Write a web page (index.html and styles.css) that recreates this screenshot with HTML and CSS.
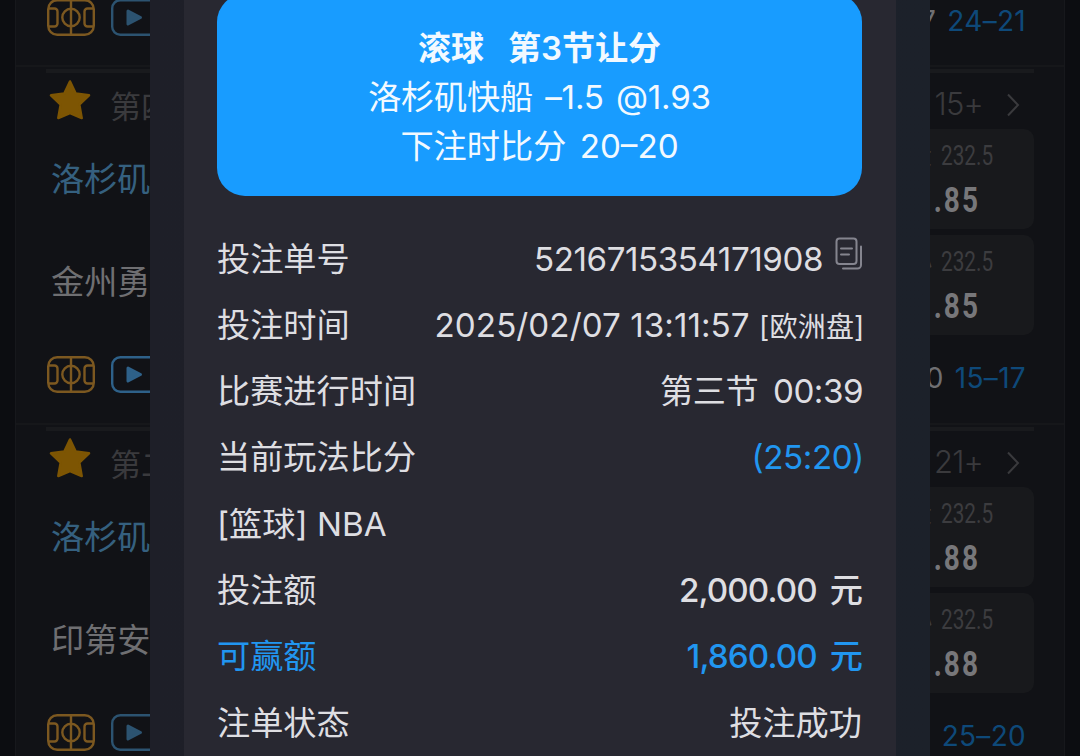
FILE: index.html
```html
<!DOCTYPE html>
<html lang="zh-CN">
<head>
  <meta charset="UTF-8" />
  <meta name="viewport" content="width=device-width, initial-scale=1.0"/>
  <title>注单详情</title>
  <link rel="stylesheet" href="styles.css">
</head>
<body>
  <!-- shared icons -->
  <svg class="sprite">
    <symbol id="court" viewBox="0 0 48 37">
      <g fill="none" stroke="currentColor" stroke-width="2.400">
        <rect x="1.200" y="1.200" width="45.600" height="34.600" rx="9"/>
        <path d="M24 1v35M2 9.500h5.500a3 3 0 0 1 3 3v12a3 3 0 0 1-3 3H2M46 9.500h-5.500a3 3 0 0 0-3 3v12a3 3 0 0 0 3 3H46"/>
        <circle cx="24" cy="18.500" r="8.700"/>
      </g>
    </symbol>
    <symbol id="video" viewBox="0 0 48 37">
      <rect x="1.200" y="1.200" width="45.600" height="34.600" rx="8" fill="none" stroke="currentColor" stroke-width="2.400"/>
      <path d="M17 12l12.500 6.500-12.500 6.500z" fill="currentColor" stroke="currentColor" stroke-width="3" stroke-linejoin="round"/>
    </symbol>
    <symbol id="star" viewBox="0 0 42 40">
      <path d="M21 1.500l5.700 12 13.300 1.800-9.700 9.200 2.400 13.500L21 33.200 9.300 38l2.400-13.500L2 15.300l13.300-1.800z" fill="currentColor" stroke="currentColor" stroke-width="2.500" stroke-linejoin="round"/>
    </symbol>
    <symbol id="arrow" viewBox="0 0 14 24">
      <path d="M2 1.500l10 10.500L2 22.500" fill="none" stroke="currentColor" stroke-width="2"/>
    </symbol>
  </svg>

  <main class="list">
    <article class="game first">
      <div class="foot">
        <svg class="court"><use href="#court"/></svg>
        <svg class="video"><use href="#video"/></svg>
        <div class="score"><span>7</span> 24–21</div>
      </div>
    </article>

    <article class="game">
      <div class="bar"></div>
      <div class="head">
        <svg class="star"><use href="#star"/></svg>
        <span class="period">第四节</span>
        <span class="more">15+</span>
        <svg class="arrow"><use href="#arrow"/></svg>
      </div>
      <div class="body">
        <div class="teams">
          <div class="team hot">洛杉矶快船</div>
          <div class="team">金州勇士</div>
        </div>
        <div class="odds">
          <div class="card"><div class="line"><i>大</i><span>232.5</span></div><b>1.85</b></div>
          <div class="card"><div class="line"><i>小</i><span>232.5</span></div><b>1.85</b></div>
        </div>
      </div>
      <div class="foot">
        <svg class="court"><use href="#court"/></svg>
        <svg class="video bright"><use href="#video"/></svg>
        <div class="score"><span>0</span> 15–17</div>
      </div>
    </article>

    <article class="game">
      <div class="bar"></div>
      <div class="head">
        <svg class="star"><use href="#star"/></svg>
        <span class="period">第二节</span>
        <span class="more">21+</span>
        <svg class="arrow"><use href="#arrow"/></svg>
      </div>
      <div class="body">
        <div class="teams">
          <div class="team hot">洛杉矶快船</div>
          <div class="team">印第安纳</div>
        </div>
        <div class="odds">
          <div class="card"><div class="line"><i>大</i><span>232.5</span></div><b>1.88</b></div>
          <div class="card"><div class="line"><i>小</i><span>232.5</span></div><b>1.88</b></div>
        </div>
      </div>
      <div class="foot">
        <svg class="court"><use href="#court"/></svg>
        <svg class="video"><use href="#video"/></svg>
        <div class="score">25–20</div>
      </div>
    </article>
  </main>

  <div class="modal">
    <section class="ticket">
      <div class="banner">
        <h1><span>滚球</span><span>第3节让分</span></h1>
        <p class="pick">洛杉矶快船 –1.5 @1.93</p>
        <p class="at">下注时比分 20–20</p>
      </div>

      <div class="row">
        <span>投注单号</span>
        <span class="value id">5216715354171908
          <svg class="copy" viewBox="0 0 28 34" fill="none" stroke="currentColor" stroke-width="2">
            <rect x="1.500" y="1.500" width="20" height="25.500" rx="3"/>
            <path d="M6 11.500h11M6 17.500h8M8 31.500h14.500a3.500 3.500 0 0 0 3.500-3.500V9.500" stroke-linecap="round"/>
          </svg>
        </span>
      </div>
      <div class="row">
        <span>投注时间</span>
        <span class="value time">2025/02/07 13:11:57 <small>[欧洲盘]</small></span>
      </div>
      <div class="row">
        <span>比赛进行时间</span>
        <span class="value clock">第三节 00:39</span>
      </div>
      <div class="row">
        <span>当前玩法比分</span>
        <span class="value now blue">(25:20)</span>
      </div>
      <div class="row">
        <span class="league">[篮球] NBA</span>
      </div>
      <div class="row">
        <span>投注额</span>
        <span class="value money">2,000.00 元</span>
      </div>
      <div class="row blue">
        <span>可赢额</span>
        <span class="value money">1,860.00 元</span>
      </div>
      <div class="row">
        <span>注单状态</span>
        <span class="value">投注成功</span>
      </div>
    </section>
  </div>
</body>
</html>
```
FILE: styles.css
```css
body {
  margin: 0;
  height: 756px;
  position: relative;
  overflow: hidden;
  background: #0c0d11;
  color: #dedee2;
  font-family: Inter, "Noto Sans CJK SC", sans-serif;
  font-size: 33.2px;
  font-weight: 370;
}
.sprite {
  display: none;
}
svg {
  display: block;
  flex: none;
}

/* match list */
.list {
  margin: 0 15px;
  border-left: 1px solid #17181c;
  border-right: 1px solid #17181c;
  background: #111216;
}
.game {
  height: 358px;
  box-sizing: border-box;
  border-top: 2px solid #16171a;
  padding: 0 30px;
  overflow: hidden;
}
.first {
  height: 65px;
  border: 0;
}
.first .foot {
  margin-top: -22px;
}
.bar {
  height: 4px;
  margin: 2px 0 0;
  background: #191a1d;
}
.head {
  display: flex;
  align-items: center;
  height: 56px;
  color: #3a3a3d;
}
.star {
  width: 42px;
  height: 40px;
  margin: 0 19px 2px 3px;
  color: #7d5503;
}
.period {
  flex: 1;
  font-size: 31px;
  padding-top: 6px;
}
.more {
  padding-top: 5px;
  font-size: 31px;
  font-weight: 300;
  letter-spacing: -.8px;
}
.arrow {
  width: 14px;
  height: 24px;
  margin: 8px 14px 0 23px;
}
.body {
  display: flex;
  justify-content: space-between;
}
.teams, .odds {
  display: grid;
  grid-template-rows: 100px 100px;
  gap: 6px;
}
.teams {
  gap: 3px;
}
.team {
  padding: 26px 0 0 5px;
  line-height: 48px;
  color: #6f6f72;
}
.hot {
  color: #35607f;
}
.card {
  width: 160px;
  box-sizing: border-box;
  padding: 10px 40px 0 0;
  border-radius: 10px;
  background: #18191c;
  font-family: Roboto, "Noto Sans CJK SC", sans-serif;
}
.line {
  display: flex;
  justify-content: flex-end;
  gap: 9px;
  height: 34px;
  line-height: 34px;
  font-size: 27px;
  font-weight: 400;
  color: #3c3c3f;
}
.line i {
  font-style: normal;
  font-size: 24px;
}
.line span {
  width: 53px;
  transform: scaleX(.77);
  transform-origin: 0 50%;
}
.card b {
  display: block;
  line-height: 56px;
  font-size: 35px;
  font-weight: 700;
  letter-spacing: 2.5px;
  text-align: right;
  color: #77777a;
  transform: scaleX(.8);
  transform-origin: 100% 50%;
  margin-right: 14px;
}
.foot {
  display: flex;
  align-items: center;
  height: 78px;
}
.court {
  width: 48px;
  height: 37px;
  margin: 0 16px 0 1px;
  color: #7c5820;
}
.video {
  width: 48px;
  height: 37px;
  color: #2c5370;
}
.bright {
  color: #2e6189;
}
.score {
  margin: 7px 8px 0 auto;
  font-size: 28px;
  font-weight: 400;
  letter-spacing: .3px;
  color: #0e4979;
}
.score span {
  margin-right: 3px;
  color: #6f6f72;
}

/* bet detail popup */
.modal {
  position: absolute;
  top: 0;
  left: 150px;
  width: 780px;
  height: 756px;
  box-sizing: border-box;
  padding: 0 34px;
  overflow: hidden;
  background: linear-gradient(90deg, #1e1f28, #1c212a);
}
.ticket {
  display: flow-root;
  height: 756px;
  padding: 0 34px 0 33px;
  background: #282831;
}
.banner {
  height: 201.5px;
  margin-top: -6px;
  box-sizing: border-box;
  display: flow-root;
  padding-top: 29.5px;
  margin-bottom: 30px;
  border-radius: 28px;
  background: #189cff;
  color: #f2f9ff;
  text-align: center;
}
.banner h1, .banner p {
  margin: 0;
  font-size: 33.2px;
  line-height: 49px;
  white-space: nowrap;
}
.banner h1 {
  display: flex;
  justify-content: center;
  gap: 24px;
  font-size: 33px;
  font-weight: 600;
}
.banner .pick {
  word-spacing: 3px;
  letter-spacing: -.2px;
}
.banner .at {
  word-spacing: 4px;
}
.row {
  display: flex;
  justify-content: space-between;
  height: 66.3px;
  line-height: 66px;
  white-space: nowrap;
}
.value {
  text-align: right;
}
.id {
  display: flex;
  gap: 12px;
  letter-spacing: -.45px;
}
.copy {
  width: 28px;
  height: 34px;
  margin: 11px -1px 0 0;
  color: #85858f;
}
.time {
  letter-spacing: .05px;
  margin-right: -2.500px;
}
.time small {
  font-size: 28px;
  letter-spacing: .2px;
}
.clock {
  word-spacing: 6px;
  letter-spacing: -.5px;
  margin-right: -1px;
}
.now {
  margin-right: -2px;
  letter-spacing: -.4px;
}
.blue {
  color: #2196f0;
}
.money {
  font-weight: 450;
  letter-spacing: -.9px;
  word-spacing: 5px;
}
```
